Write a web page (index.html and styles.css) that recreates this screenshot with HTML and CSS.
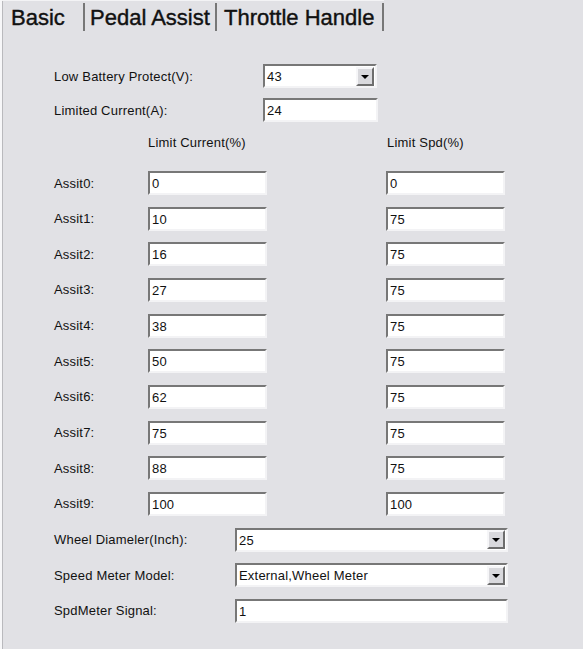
FILE: index.html
```html
<!DOCTYPE html>
<html lang="en">
<head>
  <meta charset="UTF-8">
  <title>Controller Settings - Basic</title>
  <link rel="stylesheet" href="styles.css">
</head>
<body>
  <div class="window">
    <!-- Tabs -->
    <div class="tabs">
      <div class="tab tab-basic active">Basic</div>
      <div class="tab tab-pedal">Pedal Assist</div>
      <div class="tab tab-throttle">Throttle Handle</div>
    </div>

    <!-- Basic page -->
    <div class="panel">
      <div class="row">
        <label class="label label-top">Low Battery Protect(V):</label>
        <div class="combo combo-small">
          <span class="combo-value">43</span>
          <span class="combo-btn"></span>
        </div>
      </div>
      <div class="row">
        <label class="label label-top">Limited Current(A):</label>
        <input class="field field-small" type="text" value="24">
      </div>

      <div class="headers">
        <span class="head-current">Limit Current(%)</span>
        <span class="head-spd">Limit Spd(%)</span>
      </div>

      <div class="assist-grid">
        <label class="label">Assit0:</label>
        <input class="field" type="text" value="0">
        <input class="field" type="text" value="0">

        <label class="label">Assit1:</label>
        <input class="field" type="text" value="10">
        <input class="field" type="text" value="75">

        <label class="label">Assit2:</label>
        <input class="field" type="text" value="16">
        <input class="field" type="text" value="75">

        <label class="label">Assit3:</label>
        <input class="field" type="text" value="27">
        <input class="field" type="text" value="75">

        <label class="label">Assit4:</label>
        <input class="field" type="text" value="38">
        <input class="field" type="text" value="75">

        <label class="label">Assit5:</label>
        <input class="field" type="text" value="50">
        <input class="field" type="text" value="75">

        <label class="label">Assit6:</label>
        <input class="field" type="text" value="62">
        <input class="field" type="text" value="75">

        <label class="label">Assit7:</label>
        <input class="field" type="text" value="75">
        <input class="field" type="text" value="75">

        <label class="label">Assit8:</label>
        <input class="field" type="text" value="88">
        <input class="field" type="text" value="75">

        <label class="label">Assit9:</label>
        <input class="field" type="text" value="100">
        <input class="field" type="text" value="100">
      </div>

      <div class="bottom">
        <div class="row">
          <label class="label label-wide">Wheel Diameler(Inch):</label>
          <div class="combo combo-wide">
            <span class="combo-value">25</span>
            <span class="combo-btn"></span>
          </div>
        </div>
        <div class="row">
          <label class="label label-wide">Speed Meter Model:</label>
          <div class="combo combo-wide">
            <span class="combo-value">External,Wheel Meter</span>
            <span class="combo-btn"></span>
          </div>
        </div>
        <div class="row">
          <label class="label label-wide">SpdMeter Signal:</label>
          <input class="field field-wide" type="text" value="1">
        </div>
      </div>
    </div>
  </div>
</body>
</html>
```

FILE: styles.css
```css
body {
  margin: 0;
  padding: 0;
  background: #e1e1e5;
  font-family: "Liberation Sans", Arial, sans-serif;
  color: #111;
}
.window {
  width: 583px;
  height: 649px;
  box-sizing: border-box;
  background: #e1e1e5;
  border-left: 2px solid #f7f7f9;
  box-shadow: inset 1px 0 #b9b9bd;
  overflow: hidden;
}

/* Tabs */
.tabs {
  display: flex;
  height: 31px;
}
.tab {
  box-sizing: border-box;
  height: 31px;
  padding-top: 2px;
  line-height: 29px;
  font-size: 22px;
  color: #111;
  -webkit-text-stroke: 0.4px #111;
  border-top: 1px solid #f3f3f5;
  background: linear-gradient(#777, #777) right 2px / 2px 28px no-repeat;
  white-space: nowrap;
}
.tab-basic {
  width: 83px;
  padding-left: 9px;
}
.tab-pedal {
  width: 132px;
  padding-left: 5px;
}
.tab-throttle {
  width: 167px;
  padding-left: 7px;
}

/* Form */
.panel {
  padding: 33px 0 0 52px;
  font-size: 13px;
  letter-spacing: 0.2px;
}
.row {
  display: flex;
  align-items: center;
  height: 24px;
}
.row + .row {
  margin-top: 10px;
}
.label {
  white-space: nowrap;
}
.label-top {
  width: 209px;
}
.label-wide {
  width: 181px;
}
.field {
  box-sizing: border-box;
  width: 119px;
  height: 24px;
  margin: 0;
  padding: 1px 2px 0;
  font-family: inherit;
  font-size: 13px;
  letter-spacing: 0.2px;
  color: #111;
  background: #fff;
  border: 2px solid;
  border-color: #777 #f3f3f5 #f3f3f5 #777;
  outline: none;
}
.field-small {
  width: 115px;
}
.field-wide {
  width: 273px;
}
.combo {
  box-sizing: border-box;
  height: 24px;
  display: flex;
  align-items: center;
  justify-content: space-between;
  padding: 0 1px 0 2px;
  background: #fff;
  border: 2px solid;
  border-color: #777 #f3f3f5 #f3f3f5 #777;
}
.combo-small {
  width: 114px;
}
.combo-wide {
  width: 273px;
}
.combo-value {
  padding-top: 1px;
}
.combo-btn {
  position: relative;
  box-sizing: border-box;
  width: 18px;
  height: 19px;
  background: #d9d9dd;
  border: 2px solid;
  border-color: #f6f6f8 #6d6d6d #6d6d6d #f6f6f8;
}
.combo-btn::after {
  content: "";
  position: absolute;
  left: 3px;
  top: 6px;
  border-left: 4px solid transparent;
  border-right: 4px solid transparent;
  border-top: 4px solid #000;
}

.headers {
  display: flex;
  height: 22px;
  align-items: center;
  margin-top: 9px;
}
.head-current {
  margin-left: 94px;
  width: 239px;
}

.assist-grid {
  display: grid;
  grid-template-columns: 94px 238px 119px;
  grid-auto-rows: 24px;
  row-gap: 11.67px;
  align-items: center;
  margin-top: 18px;
}

.bottom {
  margin-top: 12px;
}
.bottom .row + .row {
  margin-top: 11.5px;
}
```
